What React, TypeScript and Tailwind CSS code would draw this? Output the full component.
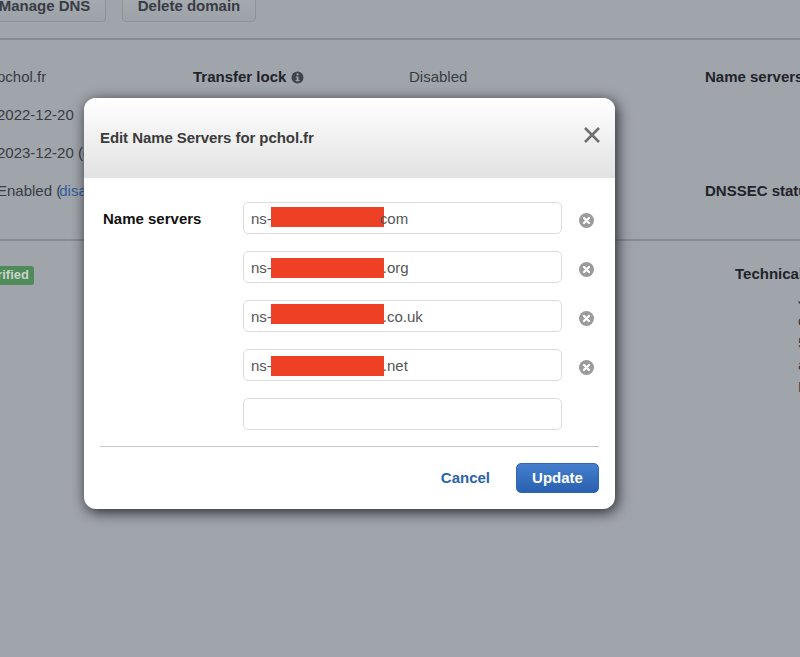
const FONT = "font-['Liberation_Sans',Arial,sans-serif]";

const servers = [
  { end: 'com', shift: '-mt-[5px]', gap: '-ml-[4px]' },
  { end: '.org', shift: 'mt-0', gap: '-ml-px' },
  { end: '.co.uk', shift: '-mt-[6px]', gap: '-ml-px' },
  { end: '.net', shift: 'mt-0', gap: '-ml-px' },
];

function InfoIcon() {
  return (
    <svg width="13" height="13" viewBox="0 0 13 13" className="shrink-0">
      <circle cx="6.5" cy="6.5" r="6" fill="#3f444b" />
      <rect x="5.6" y="2.4" width="1.9" height="1.9" fill="#a0a4ab" />
      <path d="M4.8 5.4h2.7v3.6h1v1.2H4.7V9h1V6.6h-.9z" fill="#a0a4ab" />
    </svg>
  );
}

function RemoveIcon() {
  return (
    <svg width="15" height="15" viewBox="0 0 15 15" className="shrink-0">
      <circle cx="7.5" cy="7.5" r="7.5" fill="#9b9b9b" />
      <path d="M5 5l5 5M10 5l-5 5" stroke="#fff" strokeWidth="2.3" strokeLinecap="round" />
    </svg>
  );
}

function Background() {
  return (
    <div className="text-[15px] leading-[18px] text-[#383c43]">
      {/* Action buttons */}
      <div className="-ml-[17px] -mt-[10px] flex gap-4">
        <div className="flex h-[32px] w-[123px] items-center justify-center rounded-[4px] border border-[#8f9399] bg-gradient-to-b from-[#a7abb2] to-[#9da1a8] pb-[1px] font-bold">
          Manage DNS
        </div>
        <div className="flex h-[32px] w-[134px] items-center justify-center rounded-[4px] border border-[#8f9399] bg-gradient-to-b from-[#a7abb2] to-[#9da1a8] pb-[1px] font-bold">
          Delete domain
        </div>
      </div>
      <div className="mt-[16px] h-[2px] bg-[#878b92]" />

      {/* Domain details */}
      <div className="-ml-[3px] mt-[28px] grid w-[900px] grid-cols-[196px_216px_296px_1fr] gap-y-[20px]">
        <div>pchol.fr</div>
        <div className="flex items-center gap-[5px] font-bold text-[#1f232a]">
          Transfer lock <InfoIcon />
        </div>
        <div>Disabled</div>
        <div className="font-bold text-[#1f232a]">Name servers</div>

        <div>2022-12-20</div>
        <div className="col-span-3" />

        <div>2023-12-20 (expires)</div>
        <div className="col-span-3" />

        <div>
          Enabled (<span className="-ml-[2px] text-[#2f5c9c]">disable</span>)
        </div>
        <div className="col-span-2" />
        <div className="font-bold text-[#1f232a]">DNSSEC status</div>
      </div>
      <div className="mt-[39px] h-[2px] bg-[#878b92]" />

      {/* Contacts */}
      <div className="mt-[25px] flex justify-between">
        <div className="-ml-[23px] h-[19px] rounded-[3px] bg-[#4f8a5b] px-[5px] text-[13px] font-bold leading-[18px] text-[#c9d5cb]">
          Verified
        </div>
        <div className="-mr-[120px] -mt-[1px] flex w-[185px] gap-[8px]">
          <div className="w-[55px] shrink-0 whitespace-nowrap font-bold text-[#1f232a]">Technical contact</div>
          <div className="mt-[21px] flex flex-col gap-[4px] pt-[4px] text-[#383c43]">
            <div>J</div>
            <div>c</div>
            <div>5</div>
            <div>a</div>
            <div>D</div>
          </div>
        </div>
      </div>
    </div>
  );
}

function Modal() {
  return (
    <div className="absolute left-[84px] top-[98px] h-[411px] w-[531px] overflow-hidden rounded-[12px] bg-white shadow-[2px_3px_14px_rgba(20,22,27,0.9)]">
      <div className="flex h-[80px] items-center justify-between bg-gradient-to-b from-white to-[#e2e2e2] pl-[16px] pr-[15px]">
        <h2 className="text-[15px] font-bold tracking-[-0.07px] text-[#3b3b3b]">Edit Name Servers for pchol.fr</h2>
        <svg width="16" height="16" viewBox="0 0 16 16" className="-mt-[6px]">
          <path d="M1 1l14 14M15 1L1 15" stroke="#6f6f6f" strokeWidth="2.6" />
        </svg>
      </div>

      <div className="px-[16px] pt-[24px]">
        <div className="flex">
          <div className="w-[143px] pl-[3px] pt-[8px] text-[15px] font-bold leading-[18px] text-[#111]">Name servers</div>
          <div className="flex flex-col gap-[17px]">
            {servers.map((s) => (
              <div key={s.end} className="flex items-center gap-[17px]">
                <div className="flex h-[32px] w-[319px] items-center rounded-[5px] border-[1.5px] border-[#dcdcdc] pl-[7px] pt-[2px] text-[15px] text-[#555]">
                  ns-
                  <span className={`ml-[-1px] h-[20px] w-[113px] bg-[#ee4025] ${s.shift}`} />
                  <span className={s.gap}>{s.end}</span>
                </div>
                <div className="mt-[5px]">
                  <RemoveIcon />
                </div>
              </div>
            ))}
            <div className="h-[32px] w-[319px] rounded-[5px] border-[1.5px] border-[#dcdcdc]" />
          </div>
        </div>
        <div className="mt-[16px] h-px bg-[#c6c6c6]" />
        <div className="mt-[16px] flex items-center justify-end gap-[26px]">
          <span className="text-[15px] font-bold text-[#2b62ad]">Cancel</span>
          <div className="flex h-[30px] w-[83px] items-center justify-center rounded-[5px] border border-[#2f66b5] bg-gradient-to-b from-[#447fcd] to-[#2a60b0] text-[15px] font-bold text-white">
            Update
          </div>
        </div>
      </div>
    </div>
  );
}

export default function App() {
  return (
    <div className={`relative h-[657px] w-[800px] overflow-hidden bg-[#a0a4ab] ${FONT}`}>
      <Background />
      <Modal />
    </div>
  );
}
